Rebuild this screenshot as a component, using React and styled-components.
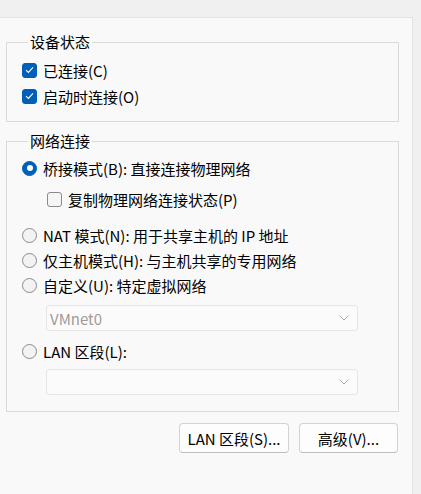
import styled, { createGlobalStyle } from "styled-components";

const GlobalStyle = createGlobalStyle`
  html, body {
    margin: 0;
    padding: 0;
    background: #f0f0f0;
  }
  body {
    font-family: "Noto Sans CJK SC", "Noto Sans", sans-serif;
    font-size: 15px;
    color: #000;
  }
`;

const Page = styled.div`
  height: 100vh;
  box-sizing: border-box;
  padding-top: 17px;
  overflow: hidden;
`;

const Panel = styled.div`
  width: 413px;
  height: 100%;
  box-sizing: border-box;
  background: #f9f9f9;
  border-top: 1px solid #e3e3e3;
  border-right: 1px solid #e3e3e3;
  padding: 14px 0 0 6px;
`;

const Group = styled.fieldset`
  width: 393px;
  box-sizing: border-box;
  margin: ${(p) => (p.$gap ? "9px 0 0" : "0")};
  border: 1px solid #dadada;
  padding: ${(p) => p.$pt}px 0 ${(p) => p.$pb}px 15px;
  min-width: 0;
`;

const Legend = styled.legend`
  margin-left: 6px;
  padding: 0 2px;
  font-size: 15px;
  line-height: 20px;
  color: #000;
`;

const Row = styled.label`
  display: flex;
  align-items: center;
  gap: 6px;
  height: ${(p) => p.$h || 25}px;
  margin-top: ${(p) => p.$mt || 0}px;
  padding-left: ${(p) => p.$indent || 0}px;
  line-height: 1;
  white-space: nowrap;
`;

const Box = styled.span`
  width: 15px;
  height: 15px;
  box-sizing: border-box;
  border-radius: 3px;
  flex-shrink: 0;
  display: flex;
  align-items: center;
  justify-content: center;
  background: ${(p) => (p.$on ? "#005fb8" : "#f5f5f5")};
  border: 1px solid ${(p) => (p.$on ? "#005fb8" : "#8a8a8a")};
`;

const Radio = styled.span`
  width: 15px;
  height: 15px;
  box-sizing: border-box;
  border-radius: 50%;
  flex-shrink: 0;
  display: flex;
  align-items: center;
  justify-content: center;
  background: ${(p) => (p.$on ? "#005fb8" : "#f3f3f3")};
  border: 1px solid ${(p) => (p.$on ? "#005fb8" : "#8a8a8a")};

  &::after {
    content: "";
    display: ${(p) => (p.$on ? "block" : "none")};
    width: 6px;
    height: 6px;
    border-radius: 50%;
    background: #fff;
  }
`;

const Select = styled.div`
  width: 312px;
  height: 26px;
  box-sizing: border-box;
  margin: ${(p) => p.$mt}px 0 0 24px;
  border: 1px solid #e5e5e5;
  border-radius: 3px;
  background: #fbfbfb;
  display: flex;
  align-items: center;
  justify-content: space-between;
  padding: 0 8px 0 3px;
  color: #9c9c9c;
  font-size: 15px;
`;

const Buttons = styled.div`
  width: 393px;
  display: flex;
  justify-content: flex-end;
  gap: 10px;
  margin-top: 11px;
  padding-right: 1px;
  box-sizing: border-box;
`;

const Button = styled.button`
  width: ${(p) => p.$w}px;
  height: 30px;
  box-sizing: border-box;
  border: 1px solid #d3d3d3;
  border-bottom-color: #bdbdbd;
  border-radius: 4px;
  background: #fdfdfd;
  font-family: inherit;
  font-size: 15px;
  color: #000;
  padding: 0;
  white-space: nowrap;
`;

const Check = () => (
  <svg width="9" height="8" viewBox="0 0 9 8">
    <path d="M1 4.2 L3.4 6.4 L8 1.4" fill="none" stroke="#fff" strokeWidth="1.1" />
  </svg>
);

const Chevron = () => (
  <svg width="10" height="6" viewBox="0 0 10 6">
    <path d="M0.5 0.5 L5 5 L9.5 0.5" fill="none" stroke="#a8a8a8" strokeWidth="1" />
  </svg>
);

export default function App() {
  return (
    <Page>
      <GlobalStyle />
      <Panel>
        <Group $pt={5} $pb={12}>
          <Legend>设备状态</Legend>
          <Row $h={26}>
            <Box $on><Check /></Box>
            已连接(C)
          </Row>
          <Row $h={26}>
            <Box $on><Check /></Box>
            启动时连接(O)
          </Row>
        </Group>

        <Group $gap $pt={4} $pb={16}>
          <Legend>网络连接</Legend>
          <Row $h={26}>
            <Radio $on />
            桥接模式(B): 直接连接物理网络
          </Row>
          <Row $h={26} $mt={5} $indent={25}>
            <Box />
            复制物理网络连接状态(P)
          </Row>
          <Row $mt={11}>
            <Radio />
            NAT 模式(N): 用于共享主机的 IP 地址
          </Row>
          <Row>
            <Radio />
            仅主机模式(H): 与主机共享的专用网络
          </Row>
          <Row>
            <Radio />
            自定义(U): 特定虚拟网络
          </Row>
          <Select $mt={7}>
            VMnet0
            <Chevron />
          </Select>
          <Row $mt={8}>
            <Radio />
            LAN 区段(L):
          </Row>
          <Select $mt={5}>
            <span />
            <Chevron />
          </Select>
        </Group>

        <Buttons>
          <Button $w={110}>LAN 区段(S)...</Button>
          <Button $w={99}>高级(V)...</Button>
        </Buttons>
      </Panel>
    </Page>
  );
}
